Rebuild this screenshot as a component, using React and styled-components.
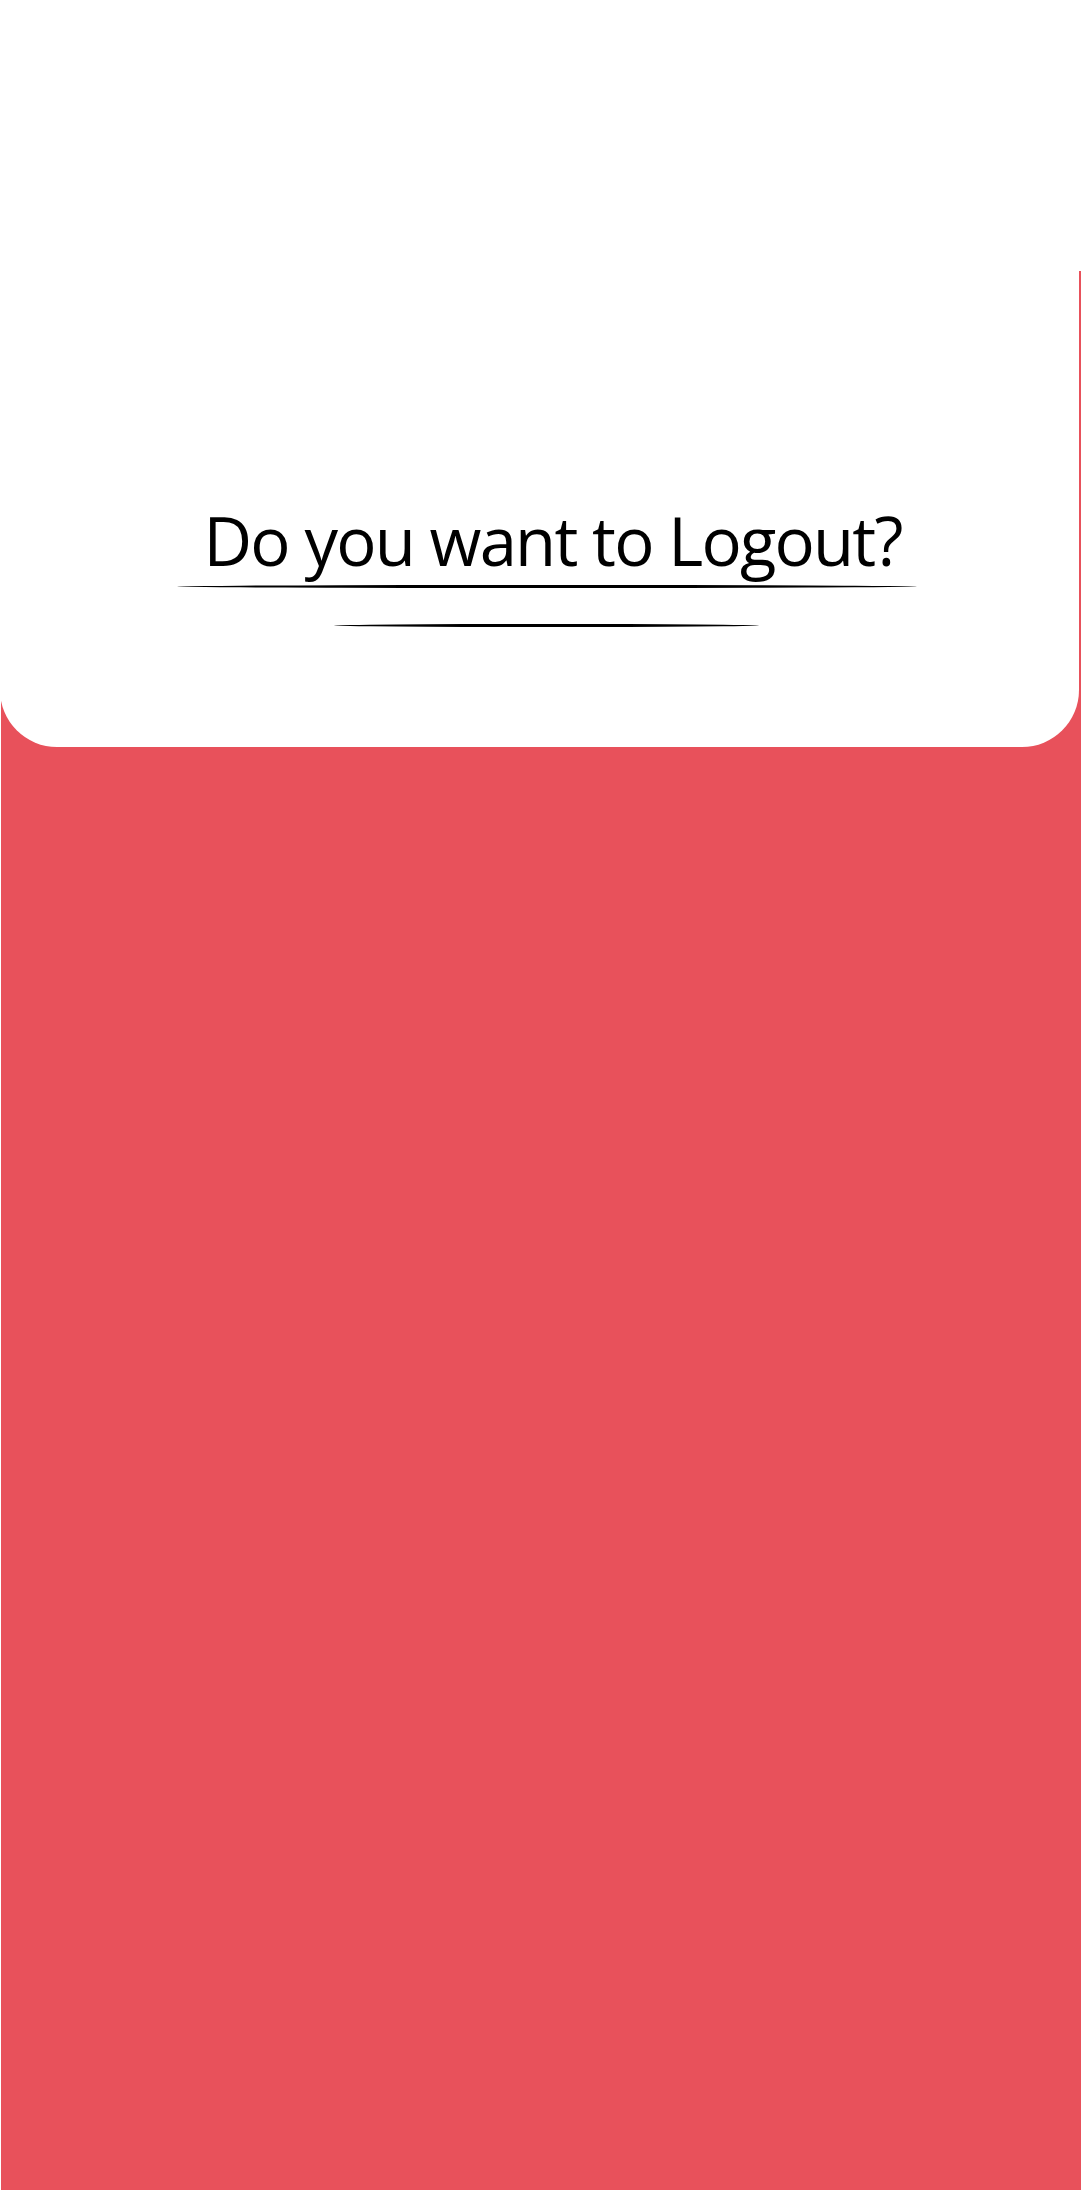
import React from "react";
import styled, { createGlobalStyle } from "styled-components";

const Global = createGlobalStyle`
  html, body { margin: 0; padding: 0; background: #ffffff; }
  body { font-family: "Open Sans", "Noto Sans", sans-serif; }
`;

const Screen = styled.div`
  display: grid;
  width: 1082px;
  height: 2192px;
  overflow: hidden;
`;

const RedPanel = styled.div`
  grid-area: 1 / 1;
  align-self: start;
  margin: 271px 0 0 1px;
  width: 1080px;
  height: 1919px;
  background: #e8515b;
`;

const Card = styled.div`
  grid-area: 1 / 1;
  align-self: start;
  position: relative;
  z-index: 1;
  width: 1079px;
  height: 747px;
  background: #ffffff;
  border-radius: 0 0 57px 57px;
  display: flex;
  flex-direction: column;
  align-items: center;
  padding: 500px 0 0 14px;
  box-sizing: border-box;
`;

const Title = styled.h1`
  margin: 0 0 0 12px;
  font-family: "Open Sans", "Noto Sans", sans-serif;
  font-weight: 400;
  font-size: 67px;
  line-height: 80px;
  color: #000;
  letter-spacing: -1.8px;
`;

const Stroke = styled.div`
  width: ${(p) => p.$w}px;
  height: ${(p) => p.$h}px;
  margin-top: ${(p) => p.$mt}px;
  background: #000;
  border-radius: 50%;
`;

export default function App() {
  return (
    <Screen>
      <Global />
      <RedPanel />
      <Card>
        <Title>Do you want to Logout?</Title>
        <Stroke $w={740} $h={3} $mt={5} />
        <Stroke $w={425} $h={3} $mt={36} />
      </Card>
    </Screen>
  );
}
